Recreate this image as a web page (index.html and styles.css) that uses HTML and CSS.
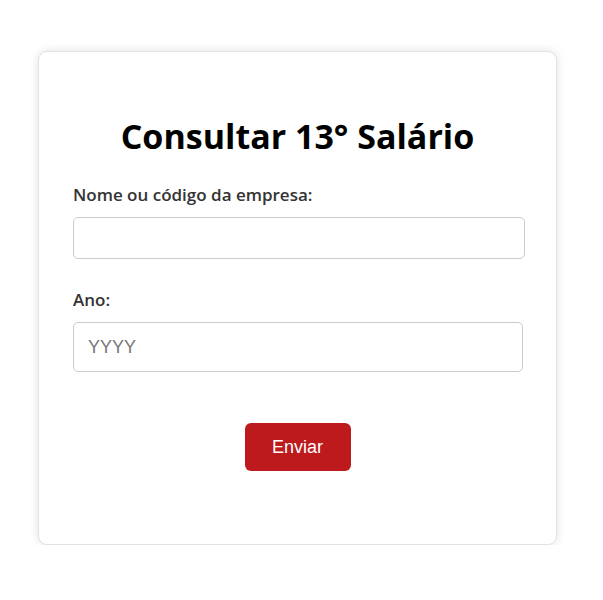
FILE: index.html
```html
<!DOCTYPE html>
<html lang="pt-BR">
<head>
<meta charset="utf-8">
<title>Consultar 13° Salário</title>
<link rel="stylesheet" href="styles.css">
</head>
<body>
<div class="card">
  <h1 class="title">Consultar 13° Salário</h1>
  <form class="form">
    <div class="field">
      <label class="label" for="empresa">Nome ou código da empresa:</label>
      <input class="input input-text" id="empresa" type="text">
    </div>
    <div class="field">
      <label class="label" for="ano">Ano:</label>
      <input class="input input-year" id="ano" type="text" placeholder="YYYY">
    </div>
    <div class="actions">
      <button class="button" type="button">Enviar</button>
    </div>
  </form>
</div>
</body>
</html>
```
FILE: styles.css
```css
* { box-sizing: border-box; }
body {
  margin: 0;
  padding: 51px 0 0 38px;
  background: #fff;
  font-family: "Open Sans", "Noto Sans", sans-serif;
}
.card {
  width: 519px;
  height: 494px;
  background: #fff;
  border: 1px solid #e2e2e2;
  border-radius: 9px;
  box-shadow: 0 0 10px rgba(0,0,0,0.12);
  padding: 61px 34px 0 34px;
}
.title {
  margin: 0 0 24px 0;
  text-align: center;
  font-size: 34px;
  font-weight: 700;
  color: #000;
  line-height: 46px;
}
.form { display: flex; flex-direction: column; }
.field { display: flex; flex-direction: column; margin-bottom: 29px; }
.label {
  font-size: 17px;
  font-weight: 600;
  color: #333;
  line-height: 24px;
  margin-bottom: 10px;
}
.input {
  border: 1px solid #ccc;
  border-radius: 5px;
  font-family: "Liberation Sans", Arial, sans-serif;
  background: #fff;
}
.input-text { width: 452px; height: 42px; padding: 0 10px; font-size: 16px; }
.input-year { width: 450px; height: 50px; padding: 0 14px; font-size: 18px; }
.input-year::placeholder { color: #777; }
.actions { display: flex; justify-content: center; padding-top: 22px; }
.button {
  width: 106px;
  height: 48px;
  border: none;
  border-radius: 6px;
  background: #bd1a1e;
  color: #fff;
  font-family: "Liberation Sans", Arial, sans-serif;
  font-size: 18px;
}
```
